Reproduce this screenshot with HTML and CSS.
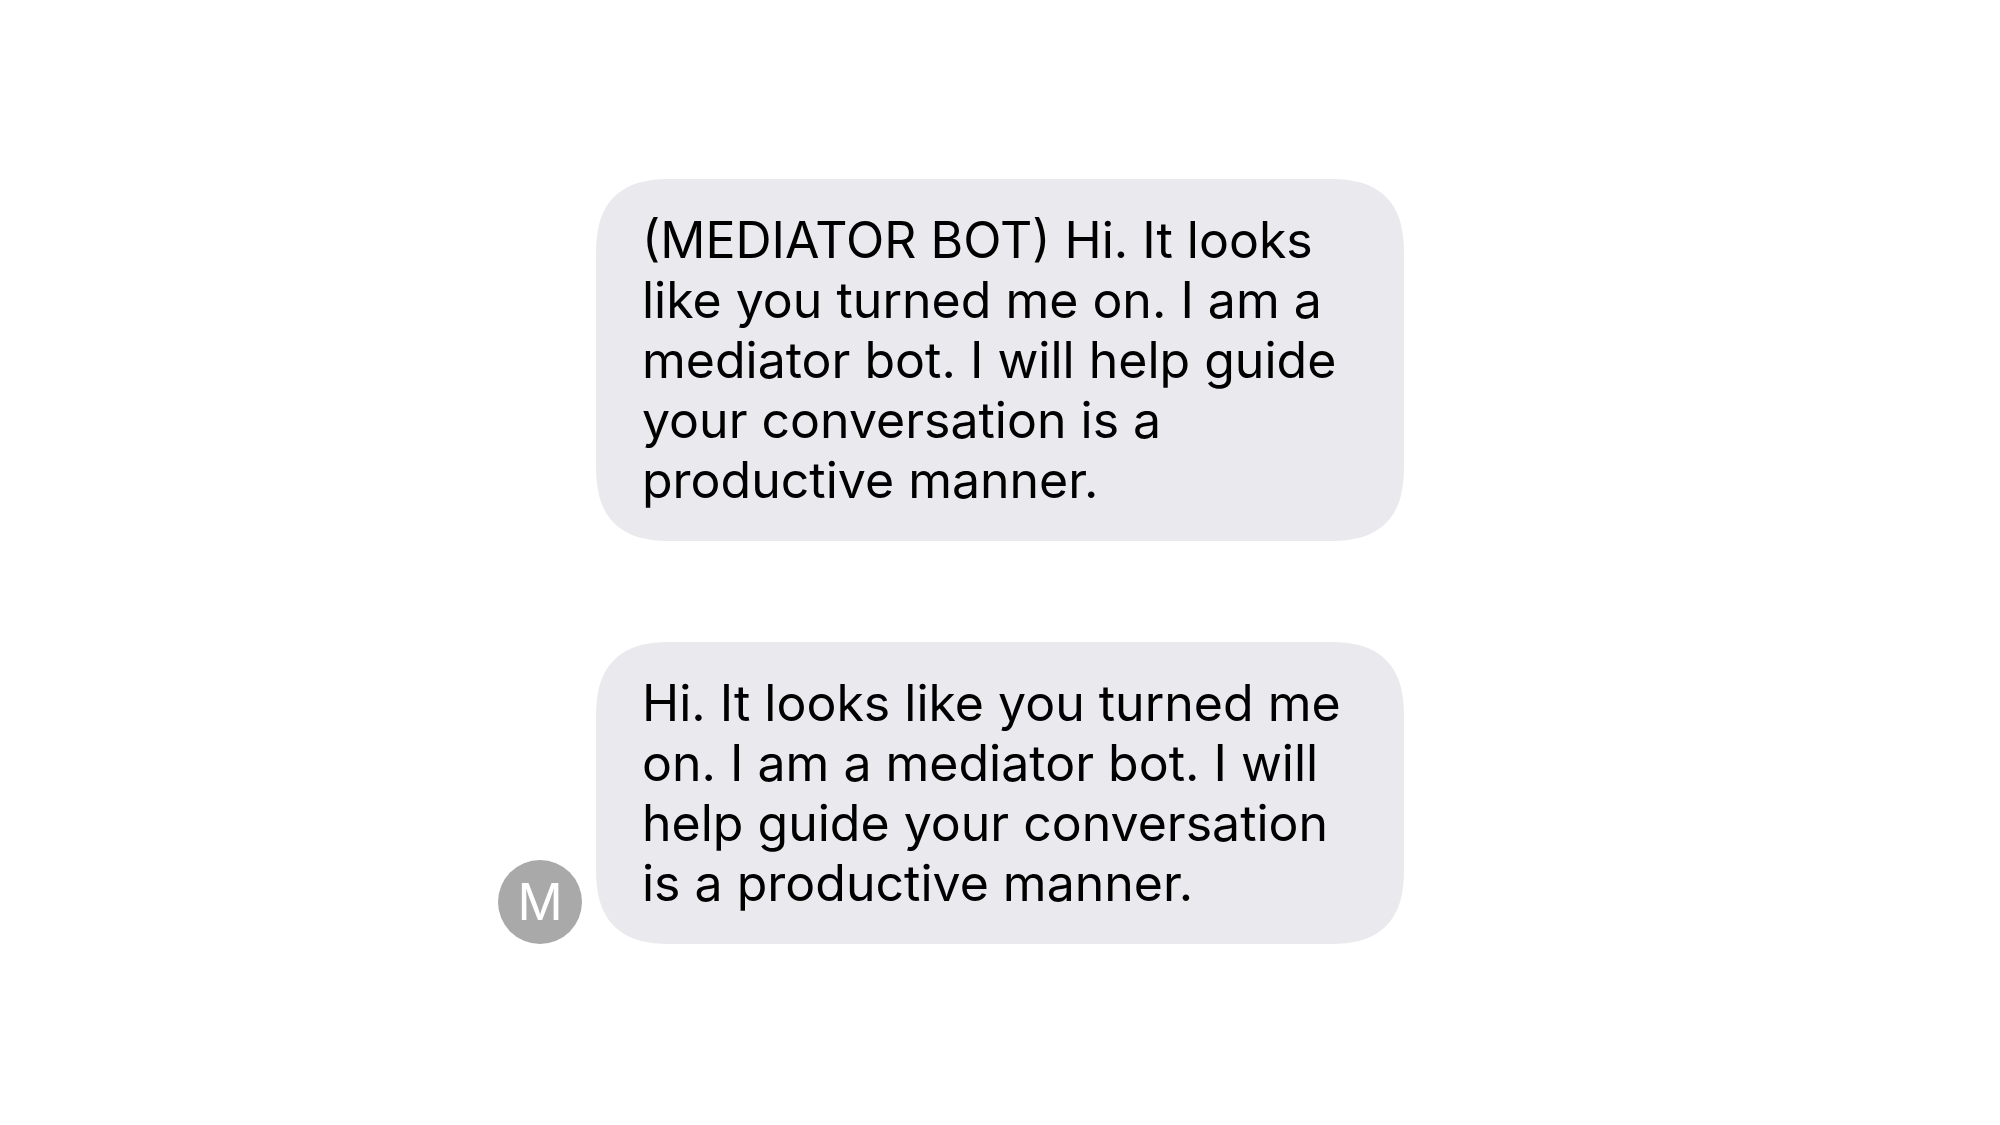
FILE: index.html
```html
<!DOCTYPE html>
<html lang="en">
<head>
<meta charset="utf-8">
<meta name="viewport" content="width=device-width, initial-scale=1">
<title>Mediator Bot</title>
<link rel="stylesheet" href="styles.css">
</head>
<body>
<main class="chat">
  <article class="message">
    <p class="bubble">(MEDIATOR BOT) Hi. It looks<br>like you turned me on. I am a<br>mediator bot. I will help guide<br>your conversation is a<br>productive manner.</p>
  </article>
  <article class="message">
    <div class="avatar">M</div>
    <p class="bubble">Hi. It looks like you turned me<br>on. I am a mediator bot. I will<br>help guide your conversation<br>is a productive manner.</p>
  </article>
</main>
</body>
</html>
```

FILE: styles.css
```css
* {
  box-sizing: border-box;
}

body {
  margin: 0;
  background: #fff;
  color: #000;
  font-family: Inter, "Liberation Sans", sans-serif;
}

.chat {
  display: flex;
  flex-direction: column;
  align-items: center;
  gap: 101px;
  padding: 179px 24px;
}

.message {
  display: grid;
  grid-template-columns: 84px minmax(0, 808px) 84px;
  column-gap: 14px;
  align-items: end;
}

.avatar {
  display: grid;
  place-items: center;
  width: 84px;
  height: 84px;
  border-radius: 50%;
  background: #a9a9a9;
  color: #fff;
  font-size: 50px;
  line-height: 60px;
}

.bubble {
  grid-column: 2;
  margin: 0;
  padding: 31px 46px;
  border-radius: 64px;
  background: #e9e9ee;
  font-size: 50px;
  line-height: 60px;
  white-space: nowrap;
}

/* Smooth continuous corners where the browser can draw them. */
@supports (corner-shape: superellipse(1.4)) {
  .bubble {
    border-radius: 78px;
    corner-shape: superellipse(1.4);
  }
}
```
